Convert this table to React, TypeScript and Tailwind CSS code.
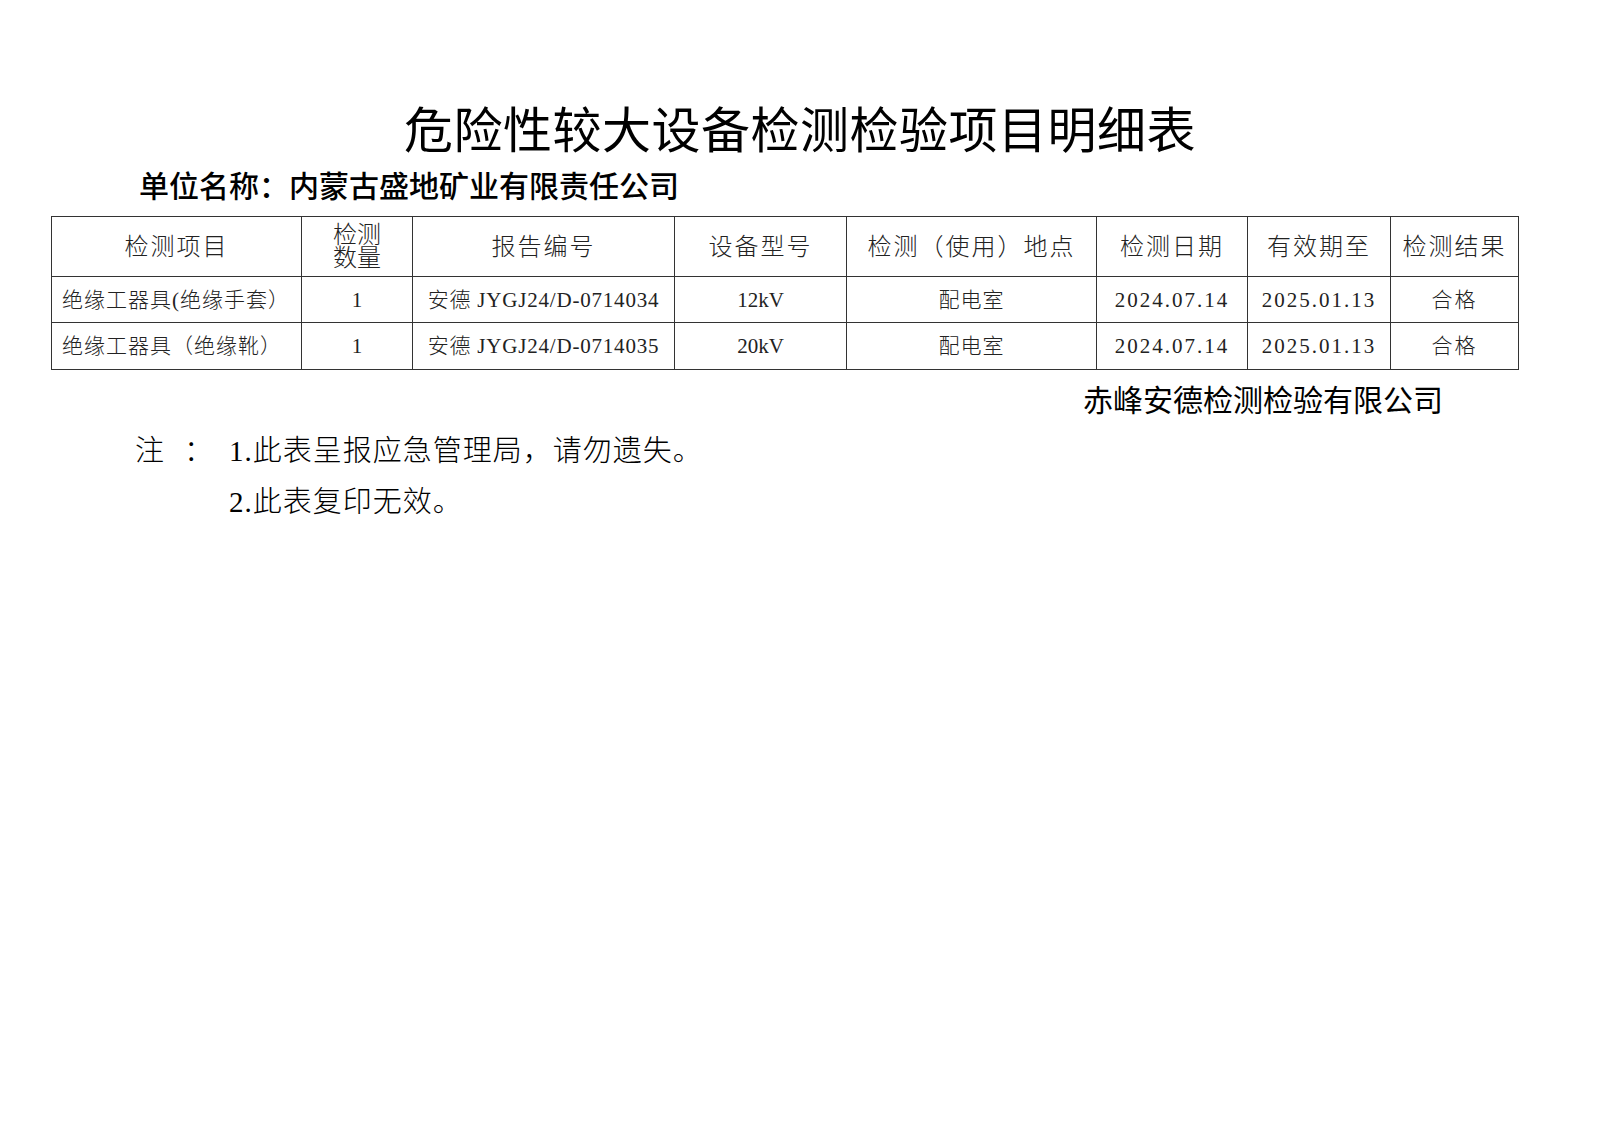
const sans = '"Noto Sans CJK SC", "Noto Sans", sans-serif'
const serif = '"Liberation Serif", "Noto Sans CJK SC", serif'

const headers = ['检测项目', '检测\n数量', '报告编号', '设备型号', '检测（使用）地点', '检测日期', '有效期至', '检测结果']
const widths = ['w-[250px]', 'w-[111px]', 'w-[262px]', 'w-[172px]', 'w-[250px]', 'w-[151px]', 'w-[143px]', 'w-[128px]']

const rows = [
  ['绝缘工器具(绝缘手套）', '1', '安德 JYGJ24/D-0714034', '12kV', '配电室', '2024.07.14', '2025.01.13', '合格'],
  ['绝缘工器具（绝缘靴）', '1', '安德 JYGJ24/D-0714035', '20kV', '配电室', '2024.07.14', '2025.01.13', '合格'],
]

export default function App() {
  return (
    <div className="w-[1600px] h-[1131px] bg-white text-black">
      <div className="pt-[97px]">
        {/* Title */}
        <h1 className="text-center text-[49px] leading-[60px] font-normal tracking-[0.5px]" style={{ fontFamily: sans }}>
          危险性较大设备检测检验项目明细表
        </h1>

        {/* Unit name */}
        <div className="mt-[7px] pl-[139px] text-[30px] leading-[40px] font-medium" style={{ fontFamily: sans }}>
          单位名称：内蒙古盛地矿业有限责任公司
        </div>

        {/* Table */}
        <table
          className="mt-[12px] ml-[51px] w-[1467px] table-fixed border-collapse text-[#222]"
          style={{ fontFamily: serif }}
        >
          <colgroup>
            {widths.map((w, i) => (
              <col key={i} className={w} />
            ))}
          </colgroup>
          <thead>
            <tr className="h-[60px]">
              {headers.map((h, i) => (
                <th
                  key={i}
                  className={`border border-[#333] p-0 text-center font-light ${
                    i === 1 ? 'text-[24px] leading-[23px] whitespace-pre-line' : 'text-[24px] leading-[30px] tracking-[2px]'
                  }`}
                >
                  {h}
                </th>
              ))}
            </tr>
          </thead>
          <tbody>
            {rows.map((r, ri) => (
              <tr key={ri} className={ri === 0 ? 'h-[46px]' : 'h-[47px]'}>
                {r.map((c, ci) => (
                  <td
                    key={ci}
                    className={`border border-[#333] p-0 text-[21px] leading-[28px] font-light whitespace-nowrap ${
                      ci === 0 ? 'text-left pl-[10px] tracking-[1px]' : 'text-center'
                    } ${ci >= 5 ? 'tracking-[2px]' : ''} ${ci === 2 ? 'tracking-[0.8px]' : ''} ${
                      ci === 4 || ci === 7 ? 'tracking-[1px]' : ''
                    }`}
                  >
                    {c}
                  </td>
                ))}
              </tr>
            ))}
          </tbody>
        </table>

        {/* Signature */}
        <div className="mt-[8px] flex justify-end pr-[157px]">
          <span className="text-[30px] leading-[40px]" style={{ fontFamily: sans }}>
            赤峰安德检测检验有限公司
          </span>
        </div>

        {/* Notes */}
        <div className="mt-[8px] flex pl-[135px] text-[29px] leading-[51px] font-light" style={{ fontFamily: serif }}>
          <div className="w-[94px] flex gap-[20px]">
            <span>注</span>
            <span>：</span>
          </div>
          <div className="flex flex-col tracking-[1px]">
            <span>1.此表呈报应急管理局，请勿遗失。</span>
            <span>2.此表复印无效。</span>
          </div>
        </div>
      </div>
    </div>
  )
}
